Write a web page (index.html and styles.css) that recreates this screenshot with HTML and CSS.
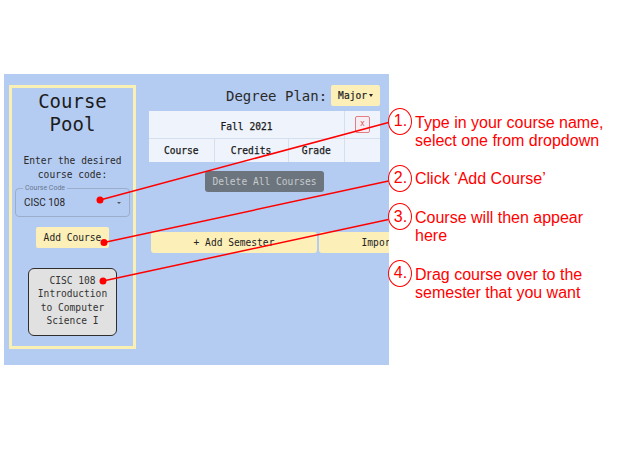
FILE: index.html
```html
<!DOCTYPE html>
<html lang="en">
<head>
<meta charset="utf-8">
<title>Degree Planner tutorial</title>
<link rel="stylesheet" href="styles.css">
</head>
<body>
<div class="page">
  <div class="app">
    <aside class="pool">
      <h1 class="pool-title">Course<br>Pool</h1>
      <p class="pool-prompt">Enter the desired course code:</p>
      <div class="field">
        <span class="field-label">Course Code</span>
        <span class="field-value">CISC 108</span>
        <span class="field-arrow"></span>
      </div>
      <button class="btn-yellow add-course">Add Course</button>
      <div class="course-card">
        <div>CISC 108</div>
        <div>Introduction to Computer Science I</div>
      </div>
    </aside>
    <main class="plan">
      <div class="plan-header">
        <span class="plan-title">Degree Plan:</span>
        <button class="btn-yellow major-btn">Major<span class="caret"></span></button>
      </div>
      <table class="semester">
        <colgroup>
          <col class="c1"><col class="c2"><col class="c3"><col class="c4">
        </colgroup>
        <tr class="sem-head">
          <th colspan="3" class="sem-name">Fall 2021</th>
          <td class="sem-close"><button class="close-btn">x</button></td>
        </tr>
        <tr class="sem-cols">
          <th>Course</th>
          <th>Credits</th>
          <th>Grade</th>
          <th></th>
        </tr>
      </table>
      <div class="delete-row"><button class="delete-btn">Delete All Courses</button></div>
      <div class="plan-actions">
        <button class="btn-yellow wide-btn">+ Add Semester</button>
        <button class="btn-yellow wide-btn">Import Courses</button>
      </div>
    </main>
  </div>
  <div class="notes">
    <div class="note"><span class="num">1.</span><span class="note-text">Type in your course name,<br>select one from dropdown</span></div>
    <div class="note"><span class="num">2.</span><span class="note-text">Click ‘Add Course’</span></div>
    <div class="note"><span class="num">3.</span><span class="note-text">Course will then appear<br>here</span></div>
    <div class="note"><span class="num">4.</span><span class="note-text">Drag course over to the<br>semester that you want</span></div>
  </div>
  <svg class="overlay" width="617" height="463" viewBox="0 0 617 463">
    <g stroke="#f00" stroke-width="1.5" fill="none">
      <line x1="100" y1="200" x2="388.5" y2="122.5"/>
      <line x1="104" y1="242.5" x2="388.5" y2="181"/>
      <line x1="103" y1="281" x2="388.5" y2="219.5"/>
    </g>
    <g fill="#f00">
      <circle cx="100" cy="200" r="3.5"/>
      <circle cx="104" cy="242.5" r="3.5"/>
      <circle cx="103" cy="281" r="3.5"/>
    </g>
  </svg>
</div>
</body>
</html>
```

FILE: styles.css
```css
* { box-sizing: border-box; }
html, body { margin: 0; padding: 0; background: #fff; }
body { width: 617px; height: 463px; overflow: hidden; }

.page {
  position: relative;
  display: flex;
  align-items: flex-start;
  padding: 74px 0 0 4px;
  width: 617px;
  height: 463px;
}

.app {
  flex: none;
  width: 385px;
  height: 291px;
  background: #b5ccf2;
  overflow: hidden;
  display: flex;
  padding: 11px 0 16px 5px;
  font-family: "DejaVu Sans Mono", monospace;
  color: #222;
}

button {
  font-family: "DejaVu Sans Mono", monospace;
  border: none;
  margin: 0;
  padding: 0;
  cursor: pointer;
}

/* ---------- pool ---------- */
.pool {
  flex: none;
  width: 127px;
  border: 3px solid #fbf0b4;
  padding: 0 3px;
  display: flex;
  flex-direction: column;
  align-items: center;
}
.pool-title {
  margin: 1.5px 0 0;
  font-size: 19px;
  line-height: 23px;
  font-weight: normal;
  text-align: center;
  color: #1c1c1c;
}
.pool-prompt {
  margin: 18.5px 0 0;
  font-size: 9.6px;
  line-height: 14px;
  text-align: center;
  color: #2a2a2a;
  width: 110px;
}
.field {
  position: relative;
  align-self: stretch;
  margin-top: 5.5px;
  height: 29px;
  border: 1px solid #9badca;
  border-radius: 4px;
  display: flex;
  align-items: center;
  padding: 0 0 0 8px;
}
.field-label {
  position: absolute;
  top: -5px;
  left: 7px;
  padding: 0 2px;
  background: #b5ccf2;
  font-family: Roboto, "Liberation Sans", sans-serif;
  font-size: 7px;
  line-height: 8px;
  color: #687891;
}
.field-value {
  font-family: Roboto, "Liberation Sans", sans-serif;
  font-size: 10px;
  color: #262626;
  flex: 1;
}
.field-arrow {
  width: 0;
  height: 0;
  border-left: 2.5px solid transparent;
  border-right: 2.5px solid transparent;
  border-top: 2.5px solid #555;
  margin: 1px 8px 0 0;
}

.btn-yellow {
  background: #fcefb8;
  color: #222;
  font-size: 9.6px;
  border-radius: 2px;
}
.add-course {
  margin-top: 10px;
  width: 73px;
  height: 21px;
}

.course-card {
  margin-top: 20.5px;
  width: 88.5px;
  height: 67.5px;
  background: #e1e1e1;
  border: 1.5px solid #2e2e2e;
  border-radius: 6px;
  padding: 4.5px 5px 0;
  font-size: 9.6px;
  line-height: 13.6px;
  text-align: center;
  color: #333;
}

/* ---------- plan ---------- */
.plan {
  flex: none;
  width: 231px;
  margin-left: 13px;
  display: flex;
  flex-direction: column;
}
.plan-header {
  display: flex;
  justify-content: flex-end;
  align-items: center;
  height: 21px;
}
.plan-title {
  font-size: 14px;
  color: #2a2a2a;
  margin-right: 4px;
}
.major-btn {
  height: 21px;
  padding: 0 7px;
  display: flex;
  align-items: center;
  gap: 2px;
  font-size: 9.6px;
  -webkit-text-stroke: 0.2px #222;
}
.caret {
  width: 0;
  height: 0;
  border-left: 2.5px solid transparent;
  border-right: 2.5px solid transparent;
  border-top: 3px solid #222;
}

.semester {
  margin-top: 5px;
  width: 231px;
  border-collapse: collapse;
  background: #eef3fc;
  font-size: 9.6px;
  table-layout: fixed;
}
.semester th, .semester td {
  padding: 0;
  text-align: center;
  font-weight: normal;
  color: #1a1a1a;
  -webkit-text-stroke: 0.25px #1a1a1a;
  border: 1px solid #d6dfed;
}
.semester .sem-name { padding-top: 4px; }
.semester tr:first-child th, .semester tr:first-child td { border-top: none; }
.semester tr:last-child th, .semester tr:last-child td { border-bottom: none; }
.semester th:first-child { border-left: none; }
.semester tr > :last-child { border-right: none; }
.sem-head { height: 27px; }
.sem-cols { height: 23.7px; }
.c1 { width: 65px; }
.c2 { width: 74px; }
.c3 { width: 56.5px; }
.c4 { width: 35.5px; }
.close-btn {
  width: 15px;
  height: 17.5px;
  border: 1px solid #e27d86;
  border-radius: 2px;
  background: #f6eef2;
  color: #e05562;
  font-size: 8px;
  line-height: 14px;
  vertical-align: middle;
  -webkit-text-stroke: 0;
}

.delete-row {
  display: flex;
  justify-content: center;
  margin-top: 9px;
}
.delete-btn {
  width: 119px;
  height: 21px;
  background: #6c757d;
  color: #c6cace;
  font-size: 9.6px;
  border-radius: 3px;
}

.plan-actions {
  margin: 40.3px 0 0 2px;
  display: flex;
  gap: 2px;
}
.wide-btn {
  flex: none;
  width: 166px;
  height: 21px;
  border-radius: 3px;
}

/* ---------- notes ---------- */
.notes {
  margin: 39.6px 0 0 -1px;
  display: flex;
  flex-direction: column;
  gap: 20px;
  font-family: "Liberation Sans", Arial, sans-serif;
  color: #f00;
  font-size: 16px;
  line-height: 18.4px;
}
.note {
  display: flex;
  align-items: flex-start;
}
.num {
  flex: none;
  width: 24px;
  height: 27px;
  margin: -5.5px 3px -6px 0;
  border: 1.5px solid #f00;
  border-radius: 50%;
  display: flex;
  align-items: center;
  justify-content: center;
  padding-left: 1px;
}
.note-text { white-space: nowrap; }

.overlay {
  position: absolute;
  left: 0;
  top: 0;
  pointer-events: none;
}
```
